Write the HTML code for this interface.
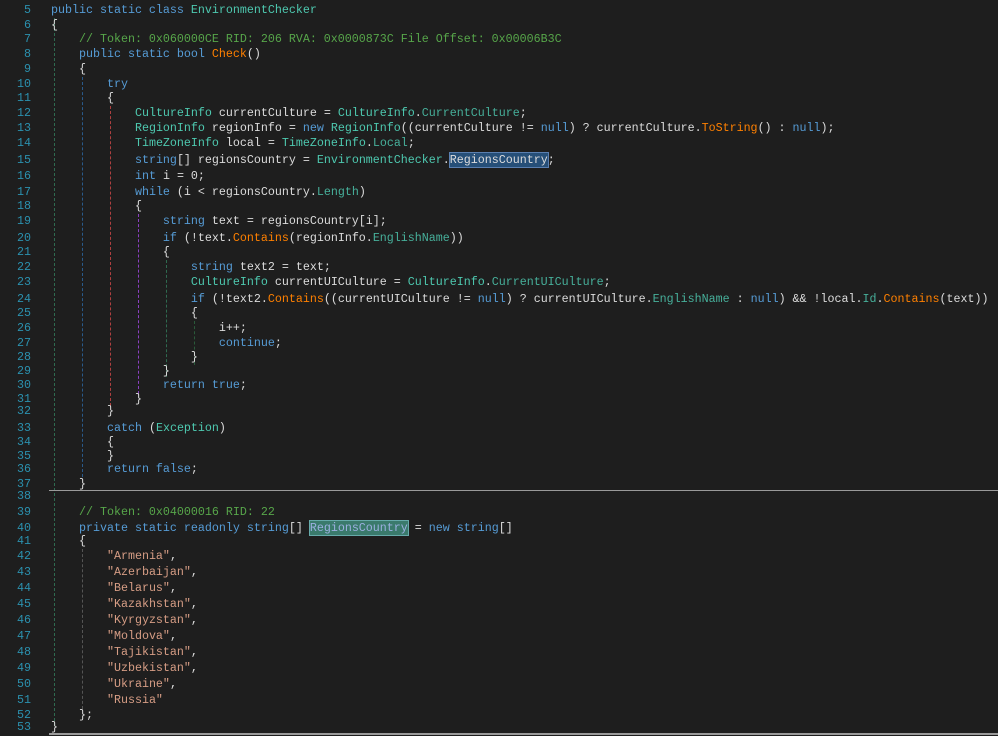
<!DOCTYPE html>
<html><head><meta charset="utf-8"><style>
body{margin:0;width:998px;height:736px;background:#1e1e1e;overflow:hidden;position:relative;font-family:"Liberation Mono",monospace;font-size:11.67px;color:#dcdcdc}
.l{position:absolute;left:0;height:15px;line-height:15px;white-space:pre;width:998px}
.n{position:absolute;left:0;width:31px;text-align:right;color:#2b91af}
.c{position:absolute;left:51px}
.k{color:#569cd6}.t{color:#4ec9b0}.m{color:#ff8000}.cm{color:#57a64a}.s{color:#d69d85}.p{color:#4ec9b0;opacity:.85}
.h1{background:#264f78;outline:1px solid #5a7fb0}
.h2{background:#3a7a6c;outline:1px solid #6aa;color:#9cb0e0}
.g{position:absolute;width:0;border-left:1px dashed}
</style></head><body>
<div class="g" style="left:54px;top:18px;height:708px;border-color:#2f6a50"></div>
<div class="g" style="left:82px;top:77px;height:400px;border-color:#2a5a8a"></div>
<div class="g" style="left:82px;top:549px;height:160px;border-color:#555"></div>
<div class="g" style="left:110px;top:106px;height:300px;border-color:#b04040"></div>
<div class="g" style="left:138px;top:214px;height:180px;border-color:#8a40c0"></div>
<div class="g" style="left:166px;top:260px;height:117px;border-color:#2f6a50"></div>
<div class="g" style="left:194px;top:321px;height:44px;border-color:#2a5a3a"></div>
<div style="position:absolute;left:49px;top:490px;width:949px;height:1px;background:#9a9a9a"></div>
<div style="position:absolute;left:49px;top:733px;width:949px;height:2px;background:#9a9a9a"></div>

<div class="l" style="top:3px"><span class="n">5</span><span class="c"><span class="k">public static class</span> <span class="t">EnvironmentChecker</span></span></div>
<div class="l" style="top:18px"><span class="n">6</span><span class="c">{</span></div>
<div class="l" style="top:32px"><span class="n">7</span><span class="c">    <span class="cm">// Token: 0x060000CE RID: 206 RVA: 0x0000873C File Offset: 0x00006B3C</span></span></div>
<div class="l" style="top:47px"><span class="n">8</span><span class="c">    <span class="k">public static bool</span> <span class="m">Check</span>()</span></div>
<div class="l" style="top:62px"><span class="n">9</span><span class="c">    {</span></div>
<div class="l" style="top:77px"><span class="n">10</span><span class="c">        <span class="k">try</span></span></div>
<div class="l" style="top:91px"><span class="n">11</span><span class="c">        {</span></div>
<div class="l" style="top:106px"><span class="n">12</span><span class="c">            <span class="t">CultureInfo</span> currentCulture = <span class="t">CultureInfo</span>.<span class="p">CurrentCulture</span>;</span></div>
<div class="l" style="top:121px"><span class="n">13</span><span class="c">            <span class="t">RegionInfo</span> regionInfo = <span class="k">new</span> <span class="t">RegionInfo</span>((currentCulture != <span class="k">null</span>) ? currentCulture.<span class="m">ToString</span>() : <span class="k">null</span>);</span></div>
<div class="l" style="top:136px"><span class="n">14</span><span class="c">            <span class="t">TimeZoneInfo</span> local = <span class="t">TimeZoneInfo</span>.<span class="p">Local</span>;</span></div>
<div class="l" style="top:153px"><span class="n">15</span><span class="c">            <span class="k">string</span>[] regionsCountry = <span class="t">EnvironmentChecker</span>.<span class="h1">RegionsCountry</span>;</span></div>
<div class="l" style="top:169px"><span class="n">16</span><span class="c">            <span class="k">int</span> i = 0;</span></div>
<div class="l" style="top:185px"><span class="n">17</span><span class="c">            <span class="k">while</span> (i &lt; regionsCountry.<span class="p">Length</span>)</span></div>
<div class="l" style="top:199px"><span class="n">18</span><span class="c">            {</span></div>
<div class="l" style="top:214px"><span class="n">19</span><span class="c">                <span class="k">string</span> text = regionsCountry[i];</span></div>
<div class="l" style="top:231px"><span class="n">20</span><span class="c">                <span class="k">if</span> (!text.<span class="m">Contains</span>(regionInfo.<span class="p">EnglishName</span>))</span></div>
<div class="l" style="top:245px"><span class="n">21</span><span class="c">                {</span></div>
<div class="l" style="top:260px"><span class="n">22</span><span class="c">                    <span class="k">string</span> text2 = text;</span></div>
<div class="l" style="top:275px"><span class="n">23</span><span class="c">                    <span class="t">CultureInfo</span> currentUICulture = <span class="t">CultureInfo</span>.<span class="p">CurrentUICulture</span>;</span></div>
<div class="l" style="top:292px"><span class="n">24</span><span class="c">                    <span class="k">if</span> (!text2.<span class="m">Contains</span>((currentUICulture != <span class="k">null</span>) ? currentUICulture.<span class="p">EnglishName</span> : <span class="k">null</span>) &amp;&amp; !local.<span class="p">Id</span>.<span class="m">Contains</span>(text))</span></div>
<div class="l" style="top:306px"><span class="n">25</span><span class="c">                    {</span></div>
<div class="l" style="top:321px"><span class="n">26</span><span class="c">                        i++;</span></div>
<div class="l" style="top:336px"><span class="n">27</span><span class="c">                        <span class="k">continue</span>;</span></div>
<div class="l" style="top:350px"><span class="n">28</span><span class="c">                    }</span></div>
<div class="l" style="top:364px"><span class="n">29</span><span class="c">                }</span></div>
<div class="l" style="top:378px"><span class="n">30</span><span class="c">                <span class="k">return true</span>;</span></div>
<div class="l" style="top:392px"><span class="n">31</span><span class="c">            }</span></div>
<div class="l" style="top:404px"><span class="n">32</span><span class="c">        }</span></div>
<div class="l" style="top:421px"><span class="n">33</span><span class="c">        <span class="k">catch</span> (<span class="t">Exception</span>)</span></div>
<div class="l" style="top:435px"><span class="n">34</span><span class="c">        {</span></div>
<div class="l" style="top:449px"><span class="n">35</span><span class="c">        }</span></div>
<div class="l" style="top:462px"><span class="n">36</span><span class="c">        <span class="k">return false</span>;</span></div>
<div class="l" style="top:477px"><span class="n">37</span><span class="c">    }</span></div>
<div class="l" style="top:489px"><span class="n">38</span></div>
<div class="l" style="top:505px"><span class="n">39</span><span class="c">    <span class="cm">// Token: 0x04000016 RID: 22</span></span></div>
<div class="l" style="top:521px"><span class="n">40</span><span class="c">    <span class="k">private static readonly string</span>[] <span class="h2">RegionsCountry</span> = <span class="k">new string</span>[]</span></div>
<div class="l" style="top:534px"><span class="n">41</span><span class="c">    {</span></div>
<div class="l" style="top:549px"><span class="n">42</span><span class="c">        <span class="s">"Armenia"</span>,</span></div>
<div class="l" style="top:565px"><span class="n">43</span><span class="c">        <span class="s">"Azerbaijan"</span>,</span></div>
<div class="l" style="top:581px"><span class="n">44</span><span class="c">        <span class="s">"Belarus"</span>,</span></div>
<div class="l" style="top:597px"><span class="n">45</span><span class="c">        <span class="s">"Kazakhstan"</span>,</span></div>
<div class="l" style="top:613px"><span class="n">46</span><span class="c">        <span class="s">"Kyrgyzstan"</span>,</span></div>
<div class="l" style="top:629px"><span class="n">47</span><span class="c">        <span class="s">"Moldova"</span>,</span></div>
<div class="l" style="top:645px"><span class="n">48</span><span class="c">        <span class="s">"Tajikistan"</span>,</span></div>
<div class="l" style="top:661px"><span class="n">49</span><span class="c">        <span class="s">"Uzbekistan"</span>,</span></div>
<div class="l" style="top:677px"><span class="n">50</span><span class="c">        <span class="s">"Ukraine"</span>,</span></div>
<div class="l" style="top:693px"><span class="n">51</span><span class="c">        <span class="s">"Russia"</span></span></div>
<div class="l" style="top:708px"><span class="n">52</span><span class="c">    };</span></div>
<div class="l" style="top:720px"><span class="n">53</span><span class="c">}</span></div>
</body></html>
